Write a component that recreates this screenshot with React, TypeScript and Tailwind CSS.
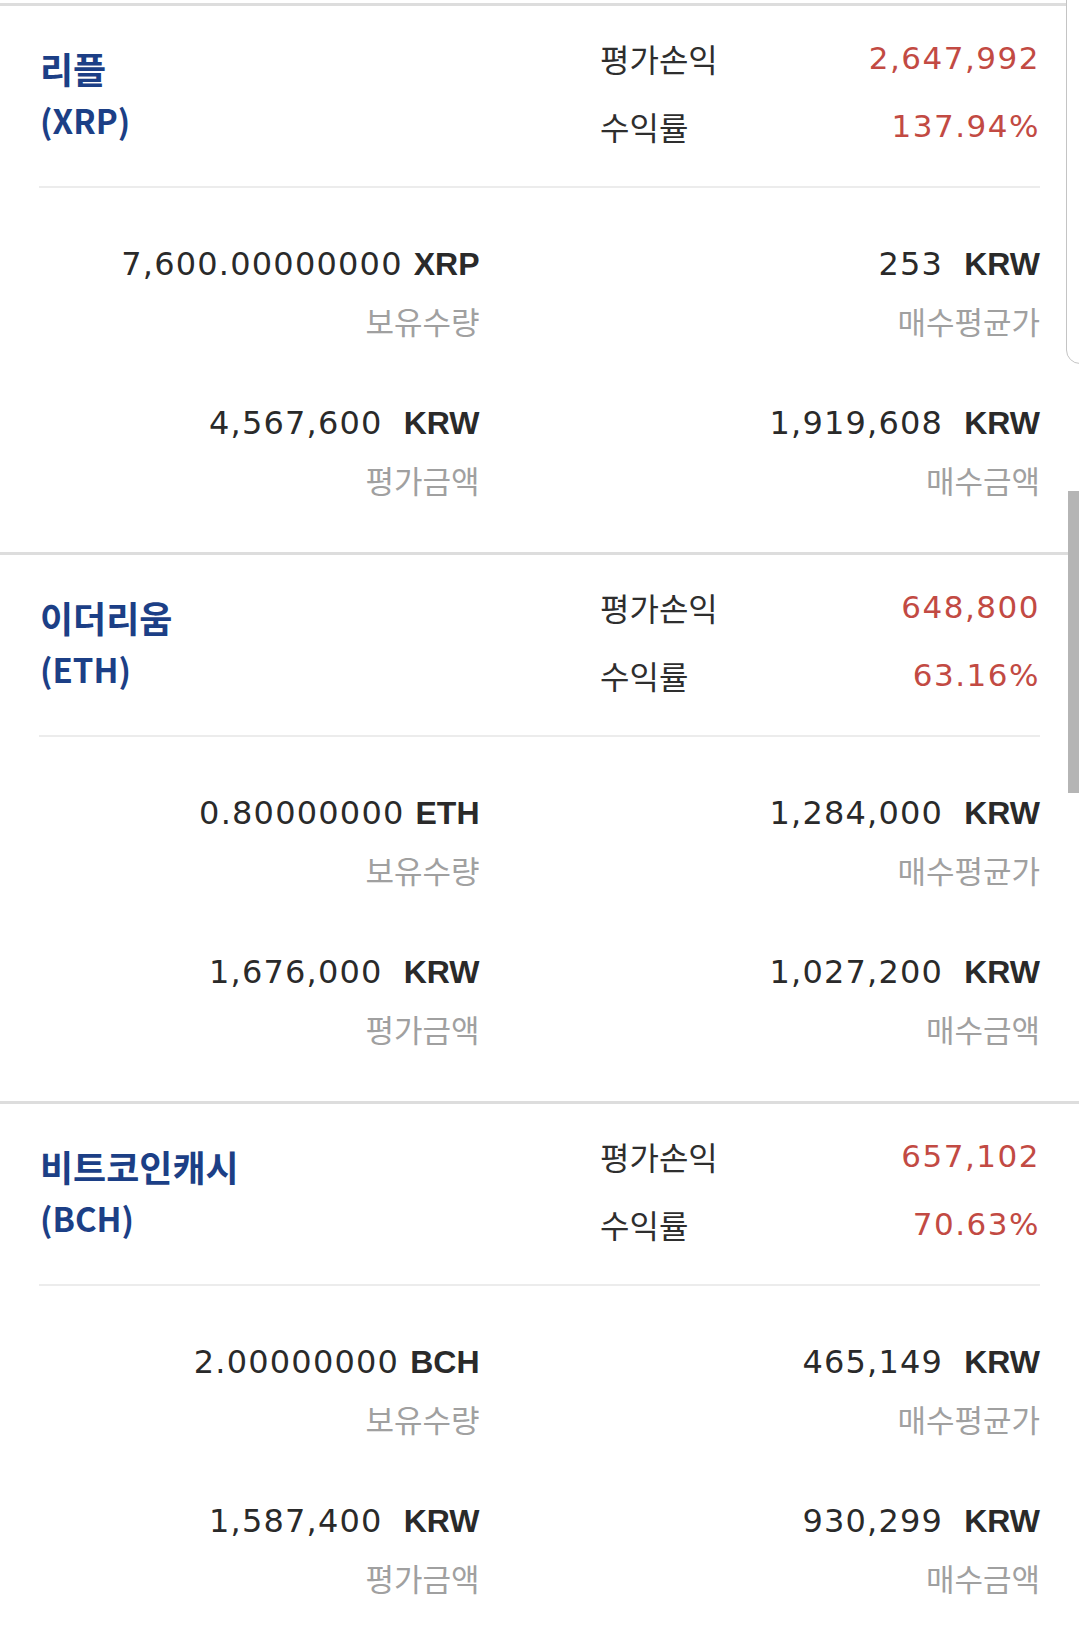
import React from 'react';

type Coin = {
  name: string;
  symbol: string;
  profit: string;
  rate: string;
  qty: string;
  avg: string;
  evalAmt: string;
  buyAmt: string;
};

const coins: Coin[] = [
  {
    name: '리플',
    symbol: 'XRP',
    profit: '2,647,992',
    rate: '137.94%',
    qty: '7,600.00000000',
    avg: '253',
    evalAmt: '4,567,600',
    buyAmt: '1,919,608',
  },
  {
    name: '이더리움',
    symbol: 'ETH',
    profit: '648,800',
    rate: '63.16%',
    qty: '0.80000000',
    avg: '1,284,000',
    evalAmt: '1,676,000',
    buyAmt: '1,027,200',
  },
  {
    name: '비트코인캐시',
    symbol: 'BCH',
    profit: '657,102',
    rate: '70.63%',
    qty: '2.00000000',
    avg: '465,149',
    evalAmt: '1,587,400',
    buyAmt: '930,299',
  },
];

const kr = "font-['Noto_Sans_CJK_KR',sans-serif]";

function Cell({ value, unit, label, wide }: { value: string; unit: string; label: string; wide?: boolean }) {
  return (
    <div className="flex flex-col items-end">
      <div className="h-[50px] leading-[50px] whitespace-nowrap text-[#2a2a2a]">
        <span className="font-['DejaVu_Sans',sans-serif] text-[32px] tracking-[1.2px]">{value}</span>
        <span className={`font-['Liberation_Sans',sans-serif] font-bold text-[32px] ${wide ? 'ml-[21px]' : 'ml-[11px]'}`}>
          {unit}
        </span>
      </div>
      <div className={`h-[64px] leading-[64px] text-[31px] text-[#a0a0a0] ${kr}`}>{label}</div>
    </div>
  );
}

function CoinSection({ coin }: { coin: Coin }) {
  return (
    <section className="border-t-[3px] border-[#dddddd]">
      <div className="flex items-start h-[180px] px-[39px]">
        <div className={`w-[561px] mt-[36px] pl-[1px] text-[#1c3f86] font-bold ${kr}`}>
          <div className="h-[52px] leading-[52px] text-[36px]">{coin.name}</div>
          <div className="h-[52px] leading-[52px] text-[33px]">({coin.symbol})</div>
        </div>
        <div className={`mt-[18px] text-[32px] text-[#2e2e2e] ${kr}`}>
          <div className="h-[68px] leading-[68px]">평가손익</div>
          <div className="h-[68px] leading-[68px]">수익률</div>
        </div>
        <div className="flex-1 mt-[18px] text-right text-[#c24a43] font-['DejaVu_Sans',sans-serif] text-[31px] tracking-[1.5px]">
          <div className="h-[68px] leading-[68px]">{coin.profit}</div>
          <div className="h-[68px] leading-[68px]">{coin.rate}</div>
        </div>
      </div>
      <div className="mx-[39px] h-[2px] bg-[#ececec]" />
      <div className="grid grid-cols-2 gap-x-[120px] gap-y-[45px] px-[39px] pt-[51px] pb-[40px]">
        <Cell value={coin.qty} unit={coin.symbol} label="보유수량" />
        <Cell value={coin.avg} unit="KRW" label="매수평균가" wide />
        <Cell value={coin.evalAmt} unit="KRW" label="평가금액" wide />
        <Cell value={coin.buyAmt} unit="KRW" label="매수금액" wide />
      </div>
    </section>
  );
}

export default function App() {
  return (
    <div className="relative w-[1079px] h-[1643px] overflow-hidden bg-white pt-[3px]">
      {coins.map((c) => (
        <CoinSection key={c.symbol} coin={c} />
      ))}
      {/* edge of a panel peeking in at top right */}
      <div className="absolute top-[-20px] left-[1066px] w-[40px] h-[384px] border border-[#c4c4c4] rounded-[14px] bg-white" />
      {/* scroll thumb */}
      <div className="absolute top-[491px] right-0 w-[11px] h-[302px] bg-[#b5b5b5]" />
    </div>
  );
}
